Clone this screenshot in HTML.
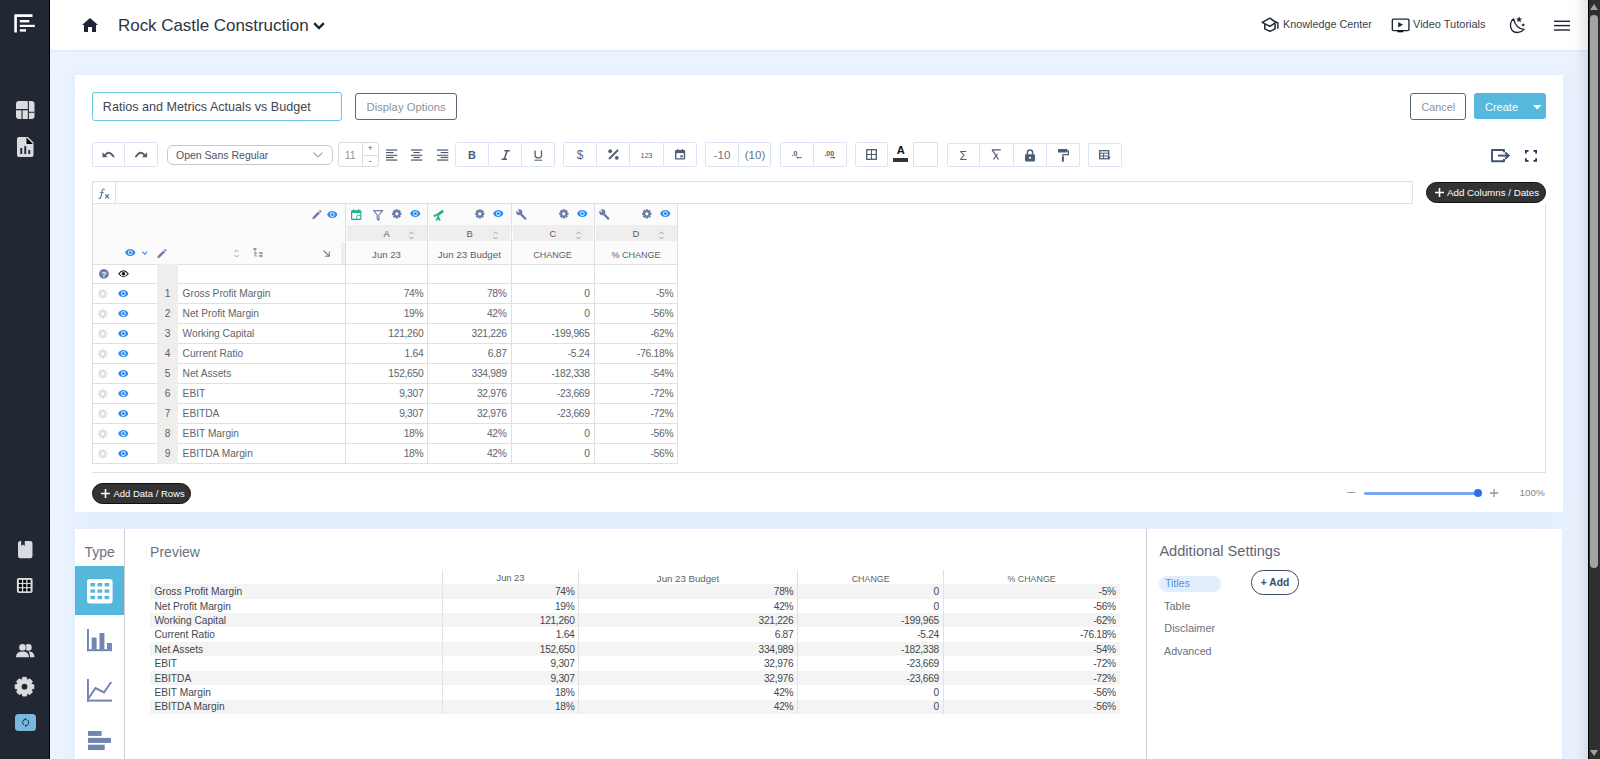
<!DOCTYPE html>
<html><head><meta charset="utf-8"><title>Rock Castle Construction</title>
<style>
html,body{margin:0;padding:0;}
body{width:1600px;height:759px;overflow:hidden;position:relative;background:#edf4fe;font-family:"Liberation Sans", sans-serif;}
.t{position:absolute;white-space:nowrap;}
.b{position:absolute;box-sizing:border-box;}
svg.b{overflow:visible;}
</style></head><body>

<div class="b" style="left:75.00px;top:75.00px;width:1487.50px;height:437.00px;background:#fff;box-shadow:0 0 20px 4px rgba(150,190,245,0.13);"></div>
<div class="b" style="left:75.00px;top:528.50px;width:1487.00px;height:240.00px;background:#fff;box-shadow:0 0 20px 4px rgba(150,190,245,0.13);"></div>
<div class="b" style="left:50.00px;top:0.00px;width:1538.00px;height:50.00px;background:#fff;box-shadow:0 1px 2px rgba(150,170,200,0.2);"></div>
<div class="b" style="left:1563.00px;top:0.00px;width:25.00px;height:759.00px;background:linear-gradient(to right, rgba(150,165,190,0) 0%, rgba(150,165,190,0.04) 55%, rgba(140,150,175,0.24) 100%);"></div>
<svg class="b" style="left:81.50px;top:17.50px;" width="16" height="14" viewBox="0 0 16 14"><path d="M8 0 L16 7 L14 7 L14 14 L10 14 L10 9 L6 9 L6 14 L2 14 L2 7 L0 7 Z" fill="#1e2433"/></svg>
<div class="t" style="top:16.65px;font-size:17px;line-height:17px;color:#2f3441;letter-spacing:-0.05px;left:118.00px;">Rock Castle Construction</div>
<svg class="b" style="left:313.00px;top:21.50px;" width="12" height="8" viewBox="0 0 12 8"><path d="M1.2 1.2 L6 6 L10.8 1.2" fill="none" stroke="#1e2433" stroke-width="2.4"/></svg>
<svg class="b" style="left:1260.50px;top:17.00px;" width="19" height="16" viewBox="0 0 19 16"><path d="M8.9 1.2 L15 5.3 L8.9 9.4 L1.2 5.4 Z" fill="none" stroke="#1e2433" stroke-width="1.5" stroke-linejoin="round"/><path d="M3.8 7.1 V11.8 L8.9 14.4 L14.1 11.8 V7" fill="none" stroke="#1e2433" stroke-width="1.5" stroke-linejoin="round"/><path d="M15 5.3 L16.9 5.7 V11.3" fill="none" stroke="#1e2433" stroke-width="1.4" stroke-linecap="round"/></svg>
<div class="t" style="top:19.42px;font-size:10.8px;line-height:10.8px;color:#3b404b;left:1283.00px;">Knowledge Center</div>
<svg class="b" style="left:1390.50px;top:17.50px;" width="19" height="15" viewBox="0 0 19 15"><rect x="1.35" y="1.15" width="16.6" height="11.4" rx="1" fill="none" stroke="#1e2433" stroke-width="1.35"/><path d="M7.2 4 L12 6.8 L7.2 9.6 Z" fill="#1e2433"/><rect x="6.4" y="12.6" width="6" height="1.7" fill="#111"/></svg>
<div class="t" style="top:19.25px;font-size:11px;line-height:11px;color:#3b404b;left:1413.00px;">Video Tutorials</div>
<svg class="b" style="left:1508.50px;top:16.00px;" width="17" height="17" viewBox="0 0 17 17"><path d="M4.6 2.9 C1.2 4.8 0.3 10.6 3 14.2 C5.6 17.4 11.6 17.4 15.1 13.4 C10.2 13.2 5.6 9.4 4.6 2.9 Z" fill="none" stroke="#1e2433" stroke-width="1.35" stroke-linejoin="round"/><path d="M10.10,0.30 L10.92,2.47 L13.24,2.58 L11.43,4.03 L12.04,6.27 L10.10,5.00 L8.16,6.27 L8.77,4.03 L6.96,2.58 L9.28,2.47 Z" fill="#1e2433"/><path d="M14.20,7.00 L14.73,8.27 L16.10,8.38 L15.06,9.28 L15.38,10.62 L14.20,9.90 L13.02,10.62 L13.34,9.28 L12.30,8.38 L13.67,8.27 Z" fill="#1e2433"/></svg>
<svg class="b" style="left:1554.00px;top:20.00px;" width="16" height="12" viewBox="0 0 16 12"><rect x="0" y="0.6" width="16" height="1.4" fill="#1e2433"/><rect x="0" y="4.9" width="16" height="1.4" fill="#1e2433"/><rect x="0" y="9.2" width="16" height="1.6" fill="#3a3f4a"/></svg>
<div class="b" style="left:0.00px;top:0.00px;width:49.00px;height:759.00px;background:#222734;"></div>
<div class="b" style="left:49.00px;top:0.00px;width:1.00px;height:759.00px;background:#000;"></div>
<svg class="b" style="left:14.00px;top:14.00px;" width="22" height="19" viewBox="0 0 22 19"><path d="M1.6 18.5 V1.6 H18.5" fill="none" stroke="#fff" stroke-width="2.6"/><rect x="5.8" y="6" width="9.5" height="2.4" fill="#fff"/><rect x="5.8" y="10.8" width="15" height="2.2" fill="#fff"/><rect x="5.8" y="15.2" width="6.2" height="2.4" fill="#fff"/></svg>
<svg class="b" style="left:16.00px;top:100.50px;" width="18.5" height="18" viewBox="0 0 18.5 18"><rect x="0" y="0" width="18.5" height="18" rx="3" fill="#d9dbe1"/><path d="M0 8.6 H12.4 M12.4 0 V18 M6 8.6 V18 M12.4 11.2 H18.5" stroke="#222734" stroke-width="1.1"/></svg>
<svg class="b" style="left:16.80px;top:136.80px;" width="16.5" height="20" viewBox="0 0 16.5 20"><path d="M2 0 H11 L16.5 5.5 V18 Q16.5 20 14.5 20 H2 Q0 20 0 18 V2 Q0 0 2 0 Z" fill="#d9dbe1"/><path d="M9.5 0.5 L16 7 H9.5 Z" fill="#000"/><rect x="3.3" y="11" width="1.9" height="6" fill="#222734"/><rect x="7.3" y="9.2" width="1.9" height="7.8" fill="#222734"/><rect x="11.3" y="13" width="1.9" height="4" fill="#222734"/></svg>
<svg class="b" style="left:17.90px;top:540.50px;" width="14.5" height="17.2" viewBox="0 0 14.5 17.2"><path d="M2.5 0 H3.2 V5 L5 3.6 L6.8 5 V0 H12 Q14.5 0 14.5 2.5 V14.7 Q14.5 17.2 12 17.2 H2.5 Q0 17.2 0 14.7 V2.5 Q0 0 2.5 0 Z" fill="#d9dbe1"/></svg>
<svg class="b" style="left:16.10px;top:577.00px;" width="17.5" height="17" viewBox="0 0 17.5 17"><rect x="0.9" y="0.9" width="15.7" height="15.2" rx="2" fill="#d9dbe1"/><rect x="2.9" y="2.9" width="3" height="3" fill="#000"/><rect x="2.9" y="7.1" width="3" height="3" fill="#000"/><rect x="2.9" y="11.3" width="3" height="3" fill="#000"/><rect x="7.2" y="2.9" width="3" height="3" fill="#000"/><rect x="7.2" y="7.1" width="3" height="3" fill="#000"/><rect x="7.2" y="11.3" width="3" height="3" fill="#000"/><rect x="11.5" y="2.9" width="3" height="3" fill="#000"/><rect x="11.5" y="7.1" width="3" height="3" fill="#000"/><rect x="11.5" y="11.3" width="3" height="3" fill="#000"/></svg>
<svg class="b" style="left:16.00px;top:644.00px;" width="18.5" height="13.5" viewBox="0 0 18.5 13.5"><circle cx="12.4" cy="3.4" r="3.3" fill="#d9dbe1"/><path d="M13.6 7.4 Q18.5 8 18.5 13.3 H14 Q14 9.6 12.6 7.5 Z" fill="#d9dbe1"/><circle cx="6.5" cy="3.4" r="3.9" fill="#222734"/><circle cx="6.5" cy="3.4" r="3.3" fill="#d9dbe1"/><path d="M-0.6 13.9 Q-0.6 6.8 6.5 6.8 Q13.6 6.8 13.6 13.9 Z" fill="#222734"/><path d="M0 13.3 Q0 7.5 6.5 7.5 Q13 7.5 13 13.3 Z" fill="#d9dbe1"/></svg>
<svg class="b" style="left:15.40px;top:677.20px;" width="19" height="19.4" viewBox="0 0 19 19.4"><path d="M16.72 7.32 L18.90 7.75 L18.90 11.65 L16.72 12.08 L16.29 13.12 L17.52 14.97 L14.77 17.72 L12.92 16.49 L11.88 16.92 L11.45 19.10 L7.55 19.10 L7.12 16.92 L6.08 16.49 L4.23 17.72 L1.48 14.97 L2.71 13.12 L2.28 12.08 L0.10 11.65 L0.10 7.75 L2.28 7.32 L2.71 6.28 L1.48 4.43 L4.23 1.68 L6.08 2.91 L7.12 2.48 L7.55 0.30 L11.45 0.30 L11.88 2.48 L12.92 2.91 L14.77 1.68 L17.52 4.43 L16.29 6.28 Z" fill="#d9dbe1" stroke="#d9dbe1" stroke-width="0.8" stroke-linejoin="round"/><circle cx="9.5" cy="9.7" r="2.9" fill="#222734"/></svg>
<div class="b" style="left:14.70px;top:713.90px;width:21.00px;height:17.30px;background:#79b7de;border-radius:3.5px;"></div>
<svg class="b" style="left:20.50px;top:717.50px;" width="9.5" height="9.5" viewBox="0 0 9.5 9.5"><path d="M4.8 1.3 A3.2 3.2 0 0 0 3.3 7.3 M4.6 7.7 A3.2 3.2 0 0 0 6.1 1.7" fill="none" stroke="#1e2433" stroke-width="0.9"/><path d="M3.4 1.3 L5.1 0.1 L5.1 2.5 Z M6 7.7 L4.3 6.5 L4.3 8.9 Z" fill="#1e2433"/></svg>
<div class="b" style="left:1588.00px;top:0.00px;width:1.20px;height:759.00px;background:#000;"></div>
<div class="b" style="left:1589.00px;top:0.00px;width:11.00px;height:759.00px;background:#2f2f2f;"></div>
<div class="b" style="left:1590.30px;top:14.80px;width:7.50px;height:553.50px;background:#a3a3a3;border-radius:4px;"></div>
<svg class="b" style="left:1590.00px;top:4.00px;" width="8" height="6" viewBox="0 0 8 6"><polygon points="0,6 4,0 8,6" fill="#a3a3a3"/></svg>
<svg class="b" style="left:1590.00px;top:750.00px;" width="8" height="6" viewBox="0 0 8 6"><polygon points="0,0 8,0 4,6" fill="#a3a3a3"/></svg>
<div class="b" style="left:91.50px;top:91.50px;width:250.00px;height:29.20px;border:1px solid #6ec4e6;border-radius:3px;background:#fff;"></div>
<div class="t" style="top:101.29px;font-size:12.6px;line-height:12.6px;color:#40464f;left:102.80px;">Ratios and Metrics Actuals vs Budget</div>
<div class="b" style="left:355.30px;top:92.60px;width:101.50px;height:27.00px;border:1px solid #5c6675;border-radius:3px;"></div>
<div class="t" style="top:101.89px;font-size:11.3px;line-height:11.3px;color:#8b929c;left:366.50px;">Display Options</div>
<div class="b" style="left:1410.00px;top:92.50px;width:55.50px;height:27.00px;border:1px solid #5c6675;border-radius:3px;"></div>
<div class="t" style="top:102.22px;font-size:10.8px;line-height:10.8px;color:#8b929c;left:1421.50px;">Cancel</div>
<div class="b" style="left:1474.00px;top:93.00px;width:71.50px;height:25.50px;background:#56b8dc;border-radius:3px;"></div>
<div class="t" style="top:101.85px;font-size:11px;line-height:11px;color:#fff;left:1485.00px;">Create</div>
<svg class="b" style="left:1533.00px;top:105.00px;" width="8.5" height="4.5" viewBox="0 0 8.5 4.5"><polygon points="0,0 8.5,0 4.25,4.5" fill="#fff"/></svg>
<div class="b" style="left:91.80px;top:142.30px;width:66.30px;height:24.80px;border:1px solid #dae4f5;border-radius:1.5px;"></div>
<div class="b" style="left:124.40px;top:142.30px;width:1.00px;height:24.80px;background:#dae4f5;"></div>
<svg class="b" style="left:101.00px;top:150.00px;" width="14" height="8" viewBox="0 0 14 8"><path d="M3.8 5.6 Q8 -0.6 12.6 6.6" fill="none" stroke="#4f5d72" stroke-width="1.8" stroke-linecap="round"/><path d="M1.5 2.2 L1.5 7.2 L6.6 7.2 Z" fill="#4f5d72"/></svg>
<svg class="b" style="left:134.00px;top:150.00px;" width="14" height="8" viewBox="0 0 14 8"><path d="M1.9 6.6 Q6.5 -0.6 10.7 5.6" fill="none" stroke="#4f5d72" stroke-width="1.8" stroke-linecap="round"/><path d="M13.1 2.2 L13.1 7.2 L8 7.2 Z" fill="#4f5d72"/></svg>
<div class="b" style="left:167.00px;top:145.00px;width:165.80px;height:19.80px;border:1px solid #c9c9c9;border-radius:6px;"></div>
<div class="t" style="top:149.88px;font-size:10.5px;line-height:10.5px;color:#4d5360;left:176.00px;">Open Sans Regular</div>
<svg class="b" style="left:312.50px;top:151.50px;" width="10" height="6" viewBox="0 0 10 6"><path d="M0.6 0.6 L5 5 L9.4 0.6" fill="none" stroke="#9aa0a8" stroke-width="1.1"/></svg>
<div class="b" style="left:337.50px;top:141.50px;width:41.20px;height:25.80px;border:1px solid #dcdcdc;border-radius:3px;"></div>
<div class="b" style="left:361.80px;top:141.50px;width:1.00px;height:25.80px;background:#dcdcdc;"></div>
<div class="b" style="left:362.00px;top:155.20px;width:16.50px;height:1.00px;background:#dcdcdc;"></div>
<div class="t" style="top:150.07px;font-size:10.5px;line-height:10.5px;color:#8f959d;left:344.80px;">11</div>
<div class="t" style="top:143.95px;font-size:9px;line-height:9px;color:#5a6270;left:70.20px;width:600px;text-align:center;">+</div>
<div class="t" style="top:156.65px;font-size:9px;line-height:9px;color:#5a6270;left:70.20px;width:600px;text-align:center;">-</div>
<svg class="b" style="left:386.00px;top:149.00px;" width="12" height="12" viewBox="0 0 12 12"><rect x="0.00" y="0.30" width="11.30" height="1.5" fill="#6f7888"/><rect x="0.00" y="3.00" width="7.60" height="1.1" fill="#485a72"/><rect x="0.00" y="5.70" width="11.30" height="1.5" fill="#6f7888"/><rect x="0.00" y="8.00" width="7.60" height="1.1" fill="#485a72"/><rect x="0.00" y="10.30" width="11.30" height="1.5" fill="#6f7888"/></svg>
<svg class="b" style="left:411.40px;top:149.00px;" width="12" height="12" viewBox="0 0 12 12"><rect x="0.00" y="0.30" width="11.30" height="1.5" fill="#6f7888"/><rect x="2.50" y="3.00" width="6.30" height="1.1" fill="#485a72"/><rect x="0.00" y="5.70" width="11.30" height="1.5" fill="#6f7888"/><rect x="2.50" y="8.00" width="6.30" height="1.1" fill="#485a72"/><rect x="0.00" y="10.30" width="11.30" height="1.5" fill="#6f7888"/></svg>
<svg class="b" style="left:436.80px;top:149.00px;" width="12" height="12" viewBox="0 0 12 12"><rect x="0.00" y="0.30" width="11.30" height="1.5" fill="#6f7888"/><rect x="3.70" y="3.00" width="7.60" height="1.1" fill="#485a72"/><rect x="0.00" y="5.70" width="11.30" height="1.5" fill="#6f7888"/><rect x="3.70" y="8.00" width="7.60" height="1.1" fill="#485a72"/><rect x="0.00" y="10.30" width="11.30" height="1.5" fill="#6f7888"/></svg>
<div class="b" style="left:455.30px;top:142.30px;width:99.30px;height:25.20px;border:1px solid #dae4f5;border-radius:1.5px;"></div>
<div class="b" style="left:487.90px;top:142.30px;width:1.00px;height:25.20px;background:#dae4f5;"></div>
<div class="b" style="left:521.00px;top:142.30px;width:1.00px;height:25.20px;background:#dae4f5;"></div>
<div class="t" style="top:149.85px;font-size:11px;line-height:11px;color:#4f5d72;font-weight:700;left:171.90px;width:600px;text-align:center;">B</div>
<svg class="b" style="left:500.50px;top:149.80px;" width="9.5" height="10" viewBox="0 0 9.5 10"><path d="M3.4 0.8 H8.8 M0.6 9.2 H6 M6.1 0.8 L3.3 9.2" fill="none" stroke="#4f5d72" stroke-width="1.5"/></svg>
<svg class="b" style="left:534.20px;top:149.60px;" width="9" height="11" viewBox="0 0 9 11"><path d="M1.1 0.6 V5.2 Q1.1 7.9 4.3 7.9 Q7.5 7.9 7.5 5.2 V0.6" fill="none" stroke="#4f5d72" stroke-width="1.3"/><rect x="0.3" y="9.7" width="8" height="1.0" fill="#4f5d72"/></svg>
<div class="b" style="left:563.30px;top:142.30px;width:133.30px;height:24.80px;border:1px solid #dae4f5;border-radius:1.5px;"></div>
<div class="b" style="left:596.20px;top:142.30px;width:1.00px;height:24.80px;background:#dae4f5;"></div>
<div class="b" style="left:629.40px;top:142.30px;width:1.00px;height:24.80px;background:#dae4f5;"></div>
<div class="b" style="left:662.80px;top:142.30px;width:1.00px;height:24.80px;background:#dae4f5;"></div>
<div class="t" style="top:149.20px;font-size:12px;line-height:12px;color:#56647a;left:280.00px;width:600px;text-align:center;">$</div>
<svg class="b" style="left:607.50px;top:149.00px;" width="11" height="11" viewBox="0 0 11 11"><path d="M1 10 L10 1" stroke="#4f5d72" stroke-width="1.8"/><circle cx="2.2" cy="2.2" r="1.9" fill="#4f5d72"/><circle cx="8.8" cy="8.8" r="1.9" fill="#4f5d72"/></svg>
<div class="t" style="top:151.62px;font-size:7.5px;line-height:7.5px;color:#4f5d72;letter-spacing:-0.3px;left:346.40px;width:600px;text-align:center;">123</div>
<svg class="b" style="left:675.00px;top:149.30px;" width="10.2" height="10.6" viewBox="0 0 10.2 10.6"><rect x="0.7" y="1.7" width="8.8" height="8.2" rx="0.7" fill="none" stroke="#4f5d72" stroke-width="1.4"/><rect x="0.7" y="1.7" width="8.8" height="2.4" fill="#4f5d72"/><rect x="2.3" y="0" width="1.2" height="2.3" fill="#4f5d72"/><rect x="6.7" y="0" width="1.2" height="2.3" fill="#4f5d72"/><rect x="5.4" y="6.2" width="2.3" height="2.2" fill="#4f5d72"/></svg>
<div class="b" style="left:705.40px;top:142.30px;width:66.10px;height:24.80px;border:1px solid #dae4f5;border-radius:1.5px;"></div>
<div class="b" style="left:737.90px;top:142.30px;width:1.00px;height:24.80px;background:#dae4f5;"></div>
<div class="t" style="top:149.53px;font-size:11.5px;line-height:11.5px;color:#6b7280;left:422.00px;width:600px;text-align:center;">-10</div>
<div class="t" style="top:149.53px;font-size:11.5px;line-height:11.5px;color:#6b7280;left:455.00px;width:600px;text-align:center;">(10)</div>
<div class="b" style="left:780.10px;top:142.30px;width:66.50px;height:24.80px;border:1px solid #dae4f5;border-radius:1.5px;"></div>
<div class="b" style="left:812.80px;top:142.30px;width:1.00px;height:24.80px;background:#dae4f5;"></div>
<svg class="b" style="left:790.00px;top:150.00px;" width="13" height="9" viewBox="0 0 13 9"><text x="1.6" y="6.2" font-size="7" font-weight="700" font-family="Liberation Sans" fill="#4f5d72">.0</text><path d="M7.4 7.6 H11.7" stroke="#4f5d72" stroke-width="0.9"/><path d="M6 7.6 L7.9 6.5 V8.7 Z" fill="#4f5d72"/></svg>
<svg class="b" style="left:823.00px;top:150.00px;" width="14" height="9" viewBox="0 0 14 9"><text x="1.4" y="6.2" font-size="7" font-weight="700" font-family="Liberation Sans" fill="#4f5d72">.00</text><path d="M7.2 7.6 H11" stroke="#4f5d72" stroke-width="0.9"/><path d="M12.3 7.6 L10.4 6.5 V8.7 Z" fill="#4f5d72"/></svg>
<div class="b" style="left:855.10px;top:142.30px;width:32.80px;height:24.80px;border:1px solid #dae4f5;border-radius:1.5px;"></div>
<svg class="b" style="left:865.50px;top:149.00px;" width="11" height="11" viewBox="0 0 11 11"><rect x="0.7" y="0.7" width="9.6" height="9.6" fill="none" stroke="#4f5d72" stroke-width="1.3"/><path d="M5.5 0.7 V10.3 M0.7 5.5 H10.3" stroke="#4f5d72" stroke-width="1.1"/></svg>
<div class="t" style="top:144.68px;font-size:11.2px;line-height:11.2px;color:#111;font-weight:700;left:600.80px;width:600px;text-align:center;">A</div>
<div class="b" style="left:893.30px;top:157.60px;width:15.00px;height:4.60px;background:#333;"></div>
<div class="b" style="left:913.30px;top:142.30px;width:24.80px;height:24.80px;border:1px solid #dedede;border-radius:2px;"></div>
<div class="b" style="left:946.90px;top:142.50px;width:133.00px;height:24.80px;border:1px solid #dae4f5;border-radius:1.5px;"></div>
<div class="b" style="left:979.40px;top:142.50px;width:1.00px;height:24.80px;background:#dae4f5;"></div>
<div class="b" style="left:1012.90px;top:142.50px;width:1.00px;height:24.80px;background:#dae4f5;"></div>
<div class="b" style="left:1046.10px;top:142.50px;width:1.00px;height:24.80px;background:#dae4f5;"></div>
<div class="t" style="top:150.00px;font-size:12px;line-height:12px;color:#4f5d72;left:663.30px;width:600px;text-align:center;">&Sigma;</div>
<svg class="b" style="left:991.00px;top:149.00px;" width="10.5" height="11.5" viewBox="0 0 10.5 11.5"><path d="M0.8 0.8 H9.8 M1.2 0.8 L7.5 10.5 M6.5 5 L2.5 10.5" stroke="#4f5d72" stroke-width="1.2" fill="none"/></svg>
<svg class="b" style="left:1024.50px;top:148.50px;" width="10" height="12.5" viewBox="0 0 10 12.5"><path d="M2.4 5.5 V3.6 A2.6 2.6 0 0 1 7.6 3.6 V5.5" fill="none" stroke="#4f5d72" stroke-width="1.5"/><rect x="0" y="5.3" width="10" height="7.2" rx="1" fill="#4f5d72"/><circle cx="5" cy="8.8" r="1.1" fill="#fff"/></svg>
<svg class="b" style="left:1058.00px;top:148.50px;" width="11" height="13" viewBox="0 0 11 13"><rect x="0" y="0" width="9.5" height="3.6" rx="0.6" fill="#4f5d72"/><path d="M9.5 1.8 H10.4 V5.6 H4.9 V8" fill="none" stroke="#4f5d72" stroke-width="1.2"/><rect x="3.9" y="7.6" width="2" height="5.2" rx="0.5" fill="#4f5d72"/></svg>
<div class="b" style="left:1088.20px;top:142.50px;width:33.50px;height:24.80px;border:1px solid #dae4f5;border-radius:1.5px;"></div>
<svg class="b" style="left:1099.00px;top:149.50px;" width="12" height="11" viewBox="0 0 12 11"><rect x="0.7" y="0.7" width="9" height="8" fill="none" stroke="#4f5d72" stroke-width="1.3"/><path d="M0.7 3.2 H9.7 M4.6 3.2 V8.7 M0.7 6 H9.7" stroke="#4f5d72" stroke-width="1"/><path d="M8.3 6.8 L11.6 6.8 L10 9.8 Z" fill="#4f5d72"/></svg>
<svg class="b" style="left:1491.00px;top:149.00px;" width="19" height="13.2" viewBox="0 0 19 13.2"><path d="M13 3.2 V1 H1 V12.2 H13 V10" fill="none" stroke="#3e5370" stroke-width="1.9" stroke-linejoin="round"/><path d="M7 6.6 H16.5" stroke="#3e5370" stroke-width="1.9"/><path d="M14.2 3.5 L17.8 6.6 L14.2 9.7" fill="none" stroke="#3e5370" stroke-width="1.9"/></svg>
<svg class="b" style="left:1524.80px;top:149.80px;" width="12" height="11.8" viewBox="0 0 12 11.8"><path d="M0.9 3.5 V0.9 H3.5 M8.5 0.9 H11.1 V3.5 M11.1 8.3 V10.9 H8.5 M3.5 10.9 H0.9 V8.3" fill="none" stroke="#20375a" stroke-width="1.8"/></svg>
<div class="b" style="left:92.00px;top:181.20px;width:1321.00px;height:22.50px;border:1px solid #e0e0e0;background:#fff;"></div>
<div class="b" style="left:115.00px;top:181.20px;width:1.00px;height:22.50px;background:#e0e0e0;"></div>
<svg class="b" style="left:97.50px;top:187.50px;" width="12.5" height="11" viewBox="0 0 12.5 11"><path d="M6.6 1.6 Q5.6 0.3 4.6 1.5 Q3.9 2.6 3.6 5.5 Q3.2 9.6 2.2 10.2 Q1.2 10.7 0.6 9.8" fill="none" stroke="#5a6d92" stroke-width="1.05"/><path d="M2.2 4.6 H5.8" stroke="#5a6d92" stroke-width="0.9"/><path d="M7.2 6.4 L11 10.4 M11 6.4 L7.2 10.4" stroke="#4570b0" stroke-width="1.2"/></svg>
<div class="b" style="left:1426.00px;top:182.00px;width:120.00px;height:21.00px;background:#333;border:1px solid #111;border-radius:11px;"></div>
<svg class="b" style="left:1435.00px;top:187.50px;" width="9" height="9" viewBox="0 0 9 9"><path d="M4.5 0 V9 M0 4.5 H9" stroke="#fff" stroke-width="1.6"/></svg>
<div class="t" style="top:187.71px;font-size:9.75px;line-height:9.75px;color:#fff;left:1447.00px;">Add Columns / Dates</div>
<div class="b" style="left:92.00px;top:203.70px;width:1454.00px;height:269.00px;border:1px solid #e0e0e0;border-top:none;border-left:none;background:#fff;"></div>
<div class="b" style="left:92.00px;top:203.70px;width:1.00px;height:260.40px;background:#e0e0e0;"></div>
<div class="b" style="left:93.00px;top:203.70px;width:585.00px;height:60.50px;background:#fbfbfb;"></div>
<div class="b" style="left:344.50px;top:203.70px;width:1.00px;height:260.00px;background:#e0e0e0;"></div>
<div class="b" style="left:427.00px;top:203.70px;width:1.00px;height:260.00px;background:#e0e0e0;"></div>
<div class="b" style="left:510.60px;top:203.70px;width:1.00px;height:260.00px;background:#e0e0e0;"></div>
<div class="b" style="left:593.90px;top:203.70px;width:1.00px;height:260.00px;background:#e0e0e0;"></div>
<div class="b" style="left:677.10px;top:203.70px;width:1.00px;height:260.00px;background:#e0e0e0;"></div>
<div class="b" style="left:347.00px;top:225.10px;width:79.60px;height:16.40px;background:#f0eded;"></div>
<div class="b" style="left:429.20px;top:225.10px;width:80.60px;height:16.40px;background:#f0eded;"></div>
<div class="b" style="left:512.50px;top:225.10px;width:80.50px;height:16.40px;background:#f0eded;"></div>
<div class="b" style="left:596.00px;top:225.10px;width:80.50px;height:16.40px;background:#f0eded;"></div>
<div class="b" style="left:341.00px;top:242.60px;width:3.50px;height:21.50px;background:#f0eded;"></div>
<div class="b" style="left:93.00px;top:263.70px;width:585.00px;height:1.00px;background:#e0e0e0;"></div>
<div class="b" style="left:93.00px;top:283.00px;width:585.00px;height:1.00px;background:#e0e0e0;"></div>
<div class="b" style="left:93.00px;top:303.00px;width:585.00px;height:1.00px;background:#e0e0e0;"></div>
<div class="b" style="left:93.00px;top:323.00px;width:585.00px;height:1.00px;background:#e0e0e0;"></div>
<div class="b" style="left:93.00px;top:343.00px;width:585.00px;height:1.00px;background:#e0e0e0;"></div>
<div class="b" style="left:93.00px;top:363.00px;width:585.00px;height:1.00px;background:#e0e0e0;"></div>
<div class="b" style="left:93.00px;top:383.00px;width:585.00px;height:1.00px;background:#e0e0e0;"></div>
<div class="b" style="left:93.00px;top:403.00px;width:585.00px;height:1.00px;background:#e0e0e0;"></div>
<div class="b" style="left:93.00px;top:423.00px;width:585.00px;height:1.00px;background:#e0e0e0;"></div>
<div class="b" style="left:93.00px;top:443.00px;width:585.00px;height:1.00px;background:#e0e0e0;"></div>
<div class="b" style="left:93.00px;top:463.00px;width:585.00px;height:1.00px;background:#e0e0e0;"></div>
<div class="b" style="left:157.40px;top:264.20px;width:20.30px;height:199.40px;background:#f0eded;"></div>
<svg class="b" style="left:311.80px;top:210.40px;" width="9.5" height="9.5" viewBox="0 0 9.5 9.5"><path d="M0.3 9.2 L0.8 7 L6.3 1.5 L8 3.2 L2.5 8.7 Z" fill="#6a7ca6"/><path d="M6.9 0.9 L7.6 0.2 Q8 -0.1 8.4 0.2 L9.3 1.1 Q9.6 1.5 9.3 1.9 L8.6 2.6 Z" fill="#6a7ca6"/></svg>
<svg class="b" style="left:327.20px;top:211.20px;" width="10.6" height="7.2" viewBox="0 0 10.6 7.2"><path d="M0.2 3.60 C1.48 -1.08 9.12 -1.08 10.40 3.60 C9.12 8.28 1.48 8.28 0.2 3.60 Z" fill="#2a8ef0"/><circle cx="5.30" cy="3.60" r="2.30" fill="#fff"/><circle cx="5.30" cy="3.60" r="1.51" fill="#2a8ef0"/></svg>
<svg class="b" style="left:125.00px;top:249.20px;" width="10.5" height="7.2" viewBox="0 0 10.5 7.2"><path d="M0.2 3.60 C1.47 -1.08 9.03 -1.08 10.30 3.60 C9.03 8.28 1.47 8.28 0.2 3.60 Z" fill="#2a8ef0"/><circle cx="5.25" cy="3.60" r="2.30" fill="#fff"/><circle cx="5.25" cy="3.60" r="1.51" fill="#2a8ef0"/></svg>
<svg class="b" style="left:142.00px;top:251.00px;" width="6" height="5" viewBox="0 0 6 5"><path d="M0.6 0.9 L2.8 3.4 L5 0.9" fill="none" stroke="#5a94ea" stroke-width="1.25" stroke-linecap="round" stroke-linejoin="round"/></svg>
<svg class="b" style="left:157.00px;top:248.50px;" width="9.5" height="9.5" viewBox="0 0 9.5 9.5"><path d="M0.3 9.2 L0.8 7 L6.3 1.5 L8 3.2 L2.5 8.7 Z" fill="#6a7ca6"/><path d="M6.9 0.9 L7.6 0.2 Q8 -0.1 8.4 0.2 L9.3 1.1 Q9.6 1.5 9.3 1.9 L8.6 2.6 Z" fill="#6a7ca6"/></svg>
<svg class="b" style="left:233.80px;top:248.70px;" width="5" height="9" viewBox="0 0 5 9"><path d="M0.6 2.9 L2.5 1 L4.4 2.9 M0.6 6.1 L2.5 8 L4.4 6.1" fill="none" stroke="#8893a6" stroke-width="0.95"/></svg>
<svg class="b" style="left:253.30px;top:248.40px;" width="10" height="9.4" viewBox="0 0 10 9.4"><rect x="0.3" y="0.2" width="3.2" height="1.5" fill="#6a7ca6"/><path d="M2 1.7 V8 H4.2 M2 5.1 H4.2" fill="none" stroke="#6a7ca6" stroke-width="0.8"/><rect x="6.2" y="4.3" width="3.4" height="1.5" fill="#6a7ca6"/><rect x="6.2" y="7.2" width="3.4" height="1.5" fill="#6a7ca6"/></svg>
<svg class="b" style="left:323.20px;top:250.00px;" width="7" height="7" viewBox="0 0 7 7"><path d="M0.5 0.5 L6 6 M6.3 1.8 V6.3 H1.8" fill="none" stroke="#6a7ca6" stroke-width="1.1"/></svg>
<svg class="b" style="left:98.50px;top:268.70px;" width="9.8" height="9.8" viewBox="0 0 9.8 9.8"><circle cx="4.9" cy="4.9" r="4.9" fill="#6b80ad"/><text x="4.9" y="8" font-size="8" font-family="Liberation Sans" font-weight="700" text-anchor="middle" fill="#fff">?</text></svg>
<svg class="b" style="left:117.60px;top:269.60px;" width="11" height="7.5" viewBox="0 0 11 7.5"><path d="M0.8 3.75 Q5.50 -2.25 10.20 3.75 Q5.50 9.75 0.8 3.75 Z" fill="none" stroke="#111" stroke-width="1.1"/><circle cx="5.50" cy="3.75" r="1.8" fill="#111"/></svg>
<svg class="b" style="left:350.90px;top:208.90px;" width="10.5" height="11" viewBox="0 0 10.5 11"><rect x="0.6" y="1.8" width="9.2" height="8.6" rx="0.6" fill="none" stroke="#1cb38c" stroke-width="1.2"/><rect x="0.6" y="1.8" width="9.2" height="2.2" fill="#1cb38c"/><rect x="2.2" y="0" width="1" height="2" fill="#1cb38c"/><rect x="7.2" y="0" width="1" height="2" fill="#1cb38c"/><circle cx="7.6" cy="8.2" r="2.1" fill="#fff" stroke="#1cb38c" stroke-width="0.9"/></svg>
<svg class="b" style="left:373.20px;top:209.50px;" width="10.2" height="10.8" viewBox="0 0 10.2 10.8"><path d="M0.6 0.6 H9.6 L6 5 V10.2 L4.2 9 V5 Z" fill="none" stroke="#6a7ca6" stroke-width="1.1" stroke-linejoin="round"/></svg>
<svg class="b" style="left:391.80px;top:209.20px;" width="9.6" height="9.6" viewBox="0 0 9.6 9.6"><path d="M8.11 3.52 L9.47 3.68 L9.47 5.92 L8.11 6.08 L8.05 6.24 L8.89 7.31 L7.31 8.89 L6.24 8.05 L6.08 8.11 L5.92 9.47 L3.68 9.47 L3.52 8.11 L3.36 8.05 L2.29 8.89 L0.71 7.31 L1.55 6.24 L1.49 6.08 L0.13 5.92 L0.13 3.68 L1.49 3.52 L1.55 3.36 L0.71 2.29 L2.29 0.71 L3.36 1.55 L3.52 1.49 L3.68 0.13 L5.92 0.13 L6.08 1.49 L6.24 1.55 L7.31 0.71 L8.89 2.29 L8.05 3.36 Z" fill="#6a7ca6"/><circle cx="4.80" cy="4.80" r="1.58" fill="#fff"/></svg>
<svg class="b" style="left:409.70px;top:210.40px;" width="10.6" height="7.2" viewBox="0 0 10.6 7.2"><path d="M0.2 3.60 C1.48 -1.08 9.12 -1.08 10.40 3.60 C9.12 8.28 1.48 8.28 0.2 3.60 Z" fill="#2a8ef0"/><circle cx="5.30" cy="3.60" r="2.30" fill="#fff"/><circle cx="5.30" cy="3.60" r="1.51" fill="#2a8ef0"/></svg>
<svg class="b" style="left:433.10px;top:208.80px;" width="11.5" height="12" viewBox="0 0 11.5 12"><path d="M3.2 5.2 L9.2 0.8 L11 3 L5 7.2 Z" fill="#1cb38c"/><path d="M0.4 6.6 L3 4.8 L4.2 6.4 L1.6 8.2 Z" fill="#1cb38c"/><path d="M5.2 7 L3 11.8 M5.2 7 L7.2 11.8 M5.2 7 V11.5" stroke="#1cb38c" stroke-width="1.1"/></svg>
<svg class="b" style="left:475.20px;top:209.20px;" width="9.6" height="9.6" viewBox="0 0 9.6 9.6"><path d="M8.11 3.52 L9.47 3.68 L9.47 5.92 L8.11 6.08 L8.05 6.24 L8.89 7.31 L7.31 8.89 L6.24 8.05 L6.08 8.11 L5.92 9.47 L3.68 9.47 L3.52 8.11 L3.36 8.05 L2.29 8.89 L0.71 7.31 L1.55 6.24 L1.49 6.08 L0.13 5.92 L0.13 3.68 L1.49 3.52 L1.55 3.36 L0.71 2.29 L2.29 0.71 L3.36 1.55 L3.52 1.49 L3.68 0.13 L5.92 0.13 L6.08 1.49 L6.24 1.55 L7.31 0.71 L8.89 2.29 L8.05 3.36 Z" fill="#6a7ca6"/><circle cx="4.80" cy="4.80" r="1.58" fill="#fff"/></svg>
<svg class="b" style="left:493.00px;top:210.40px;" width="10.6" height="7.2" viewBox="0 0 10.6 7.2"><path d="M0.2 3.60 C1.48 -1.08 9.12 -1.08 10.40 3.60 C9.12 8.28 1.48 8.28 0.2 3.60 Z" fill="#2a8ef0"/><circle cx="5.30" cy="3.60" r="2.30" fill="#fff"/><circle cx="5.30" cy="3.60" r="1.51" fill="#2a8ef0"/></svg>
<svg class="b" style="left:515.50px;top:209.20px;" width="10.5" height="10.5" viewBox="0 0 10.5 10.5"><path d="M9.3 9.6 L4.6 4.9" stroke="#6a7ca6" stroke-width="2.2" stroke-linecap="round"/><circle cx="3.3" cy="3.3" r="3" fill="#6a7ca6"/><path d="M1.3 0.4 L3.4 2.5 L2.5 3.4 L0.4 1.3 Z" fill="#fff"/></svg>
<svg class="b" style="left:558.50px;top:209.20px;" width="9.6" height="9.6" viewBox="0 0 9.6 9.6"><path d="M8.11 3.52 L9.47 3.68 L9.47 5.92 L8.11 6.08 L8.05 6.24 L8.89 7.31 L7.31 8.89 L6.24 8.05 L6.08 8.11 L5.92 9.47 L3.68 9.47 L3.52 8.11 L3.36 8.05 L2.29 8.89 L0.71 7.31 L1.55 6.24 L1.49 6.08 L0.13 5.92 L0.13 3.68 L1.49 3.52 L1.55 3.36 L0.71 2.29 L2.29 0.71 L3.36 1.55 L3.52 1.49 L3.68 0.13 L5.92 0.13 L6.08 1.49 L6.24 1.55 L7.31 0.71 L8.89 2.29 L8.05 3.36 Z" fill="#6a7ca6"/><circle cx="4.80" cy="4.80" r="1.58" fill="#fff"/></svg>
<svg class="b" style="left:576.50px;top:210.40px;" width="10.6" height="7.2" viewBox="0 0 10.6 7.2"><path d="M0.2 3.60 C1.48 -1.08 9.12 -1.08 10.40 3.60 C9.12 8.28 1.48 8.28 0.2 3.60 Z" fill="#2a8ef0"/><circle cx="5.30" cy="3.60" r="2.30" fill="#fff"/><circle cx="5.30" cy="3.60" r="1.51" fill="#2a8ef0"/></svg>
<svg class="b" style="left:598.50px;top:209.20px;" width="10.5" height="10.5" viewBox="0 0 10.5 10.5"><path d="M9.3 9.6 L4.6 4.9" stroke="#6a7ca6" stroke-width="2.2" stroke-linecap="round"/><circle cx="3.3" cy="3.3" r="3" fill="#6a7ca6"/><path d="M1.3 0.4 L3.4 2.5 L2.5 3.4 L0.4 1.3 Z" fill="#fff"/></svg>
<svg class="b" style="left:641.80px;top:209.20px;" width="9.6" height="9.6" viewBox="0 0 9.6 9.6"><path d="M8.11 3.52 L9.47 3.68 L9.47 5.92 L8.11 6.08 L8.05 6.24 L8.89 7.31 L7.31 8.89 L6.24 8.05 L6.08 8.11 L5.92 9.47 L3.68 9.47 L3.52 8.11 L3.36 8.05 L2.29 8.89 L0.71 7.31 L1.55 6.24 L1.49 6.08 L0.13 5.92 L0.13 3.68 L1.49 3.52 L1.55 3.36 L0.71 2.29 L2.29 0.71 L3.36 1.55 L3.52 1.49 L3.68 0.13 L5.92 0.13 L6.08 1.49 L6.24 1.55 L7.31 0.71 L8.89 2.29 L8.05 3.36 Z" fill="#6a7ca6"/><circle cx="4.80" cy="4.80" r="1.58" fill="#fff"/></svg>
<svg class="b" style="left:659.60px;top:210.40px;" width="10.6" height="7.2" viewBox="0 0 10.6 7.2"><path d="M0.2 3.60 C1.48 -1.08 9.12 -1.08 10.40 3.60 C9.12 8.28 1.48 8.28 0.2 3.60 Z" fill="#2a8ef0"/><circle cx="5.30" cy="3.60" r="2.30" fill="#fff"/><circle cx="5.30" cy="3.60" r="1.51" fill="#2a8ef0"/></svg>
<div class="t" style="top:229.01px;font-size:9.4px;line-height:9.4px;color:#5a5f66;left:86.70px;width:600px;text-align:center;">A</div>
<svg class="b" style="left:409.40px;top:230.60px;" width="5" height="9" viewBox="0 0 5 9"><path d="M0.6 2.9 L2.5 1 L4.4 2.9 M0.6 6.1 L2.5 8 L4.4 6.1" fill="none" stroke="#8893a6" stroke-width="0.95"/></svg>
<div class="t" style="top:229.01px;font-size:9.4px;line-height:9.4px;color:#5a5f66;left:169.60px;width:600px;text-align:center;">B</div>
<svg class="b" style="left:492.70px;top:230.60px;" width="5" height="9" viewBox="0 0 5 9"><path d="M0.6 2.9 L2.5 1 L4.4 2.9 M0.6 6.1 L2.5 8 L4.4 6.1" fill="none" stroke="#8893a6" stroke-width="0.95"/></svg>
<div class="t" style="top:229.01px;font-size:9.4px;line-height:9.4px;color:#5a5f66;left:252.80px;width:600px;text-align:center;">C</div>
<svg class="b" style="left:575.90px;top:230.60px;" width="5" height="9" viewBox="0 0 5 9"><path d="M0.6 2.9 L2.5 1 L4.4 2.9 M0.6 6.1 L2.5 8 L4.4 6.1" fill="none" stroke="#8893a6" stroke-width="0.95"/></svg>
<div class="t" style="top:229.01px;font-size:9.4px;line-height:9.4px;color:#5a5f66;left:336.00px;width:600px;text-align:center;">D</div>
<svg class="b" style="left:659.00px;top:230.60px;" width="5" height="9" viewBox="0 0 5 9"><path d="M0.6 2.9 L2.5 1 L4.4 2.9 M0.6 6.1 L2.5 8 L4.4 6.1" fill="none" stroke="#8893a6" stroke-width="0.95"/></svg>
<div class="t" style="top:250.14px;font-size:9.6px;line-height:9.6px;color:#5a5f66;left:86.50px;width:600px;text-align:center;">Jun 23</div>
<div class="t" style="top:249.97px;font-size:9.8px;line-height:9.8px;color:#5a5f66;left:169.40px;width:600px;text-align:center;">Jun 23 Budget</div>
<div class="t" style="top:250.65px;font-size:9.0px;line-height:9.0px;color:#5a5f66;left:252.60px;width:600px;text-align:center;">CHANGE</div>
<div class="t" style="top:250.65px;font-size:9.0px;line-height:9.0px;color:#5a5f66;left:336.00px;width:600px;text-align:center;">% CHANGE</div>
<svg class="b" style="left:98.20px;top:289.10px;" width="9.6" height="9.6" viewBox="0 0 9.6 9.6"><path d="M8.11 3.52 L9.47 3.68 L9.47 5.92 L8.11 6.08 L8.05 6.24 L8.89 7.31 L7.31 8.89 L6.24 8.05 L6.08 8.11 L5.92 9.47 L3.68 9.47 L3.52 8.11 L3.36 8.05 L2.29 8.89 L0.71 7.31 L1.55 6.24 L1.49 6.08 L0.13 5.92 L0.13 3.68 L1.49 3.52 L1.55 3.36 L0.71 2.29 L2.29 0.71 L3.36 1.55 L3.52 1.49 L3.68 0.13 L5.92 0.13 L6.08 1.49 L6.24 1.55 L7.31 0.71 L8.89 2.29 L8.05 3.36 Z" fill="#dde1e8"/><circle cx="4.80" cy="4.80" r="1.58" fill="#fff"/></svg>
<svg class="b" style="left:118.00px;top:289.70px;" width="10.6" height="7.2" viewBox="0 0 10.6 7.2"><path d="M0.2 3.60 C1.48 -1.08 9.12 -1.08 10.40 3.60 C9.12 8.28 1.48 8.28 0.2 3.60 Z" fill="#2a8ef0"/><circle cx="5.30" cy="3.60" r="2.30" fill="#fff"/><circle cx="5.30" cy="3.60" r="1.51" fill="#2a8ef0"/></svg>
<div class="t" style="top:288.63px;font-size:10.2px;line-height:10.2px;color:#5a5f66;left:-132.40px;width:600px;text-align:center;">1</div>
<div class="t" style="top:288.63px;font-size:10.2px;line-height:10.2px;color:#60656c;left:182.60px;">Gross Profit Margin</div>
<div class="t" style="top:288.55px;font-size:10.3px;line-height:10.3px;color:#60656c;letter-spacing:-0.3px;right:1176.60px;text-align:right;">74%</div>
<div class="t" style="top:288.55px;font-size:10.3px;line-height:10.3px;color:#60656c;letter-spacing:-0.3px;right:1093.40px;text-align:right;">78%</div>
<div class="t" style="top:288.55px;font-size:10.3px;line-height:10.3px;color:#60656c;letter-spacing:-0.3px;right:1010.30px;text-align:right;">0</div>
<div class="t" style="top:288.55px;font-size:10.3px;line-height:10.3px;color:#60656c;letter-spacing:-0.3px;right:926.70px;text-align:right;">-5%</div>
<svg class="b" style="left:98.20px;top:309.10px;" width="9.6" height="9.6" viewBox="0 0 9.6 9.6"><path d="M8.11 3.52 L9.47 3.68 L9.47 5.92 L8.11 6.08 L8.05 6.24 L8.89 7.31 L7.31 8.89 L6.24 8.05 L6.08 8.11 L5.92 9.47 L3.68 9.47 L3.52 8.11 L3.36 8.05 L2.29 8.89 L0.71 7.31 L1.55 6.24 L1.49 6.08 L0.13 5.92 L0.13 3.68 L1.49 3.52 L1.55 3.36 L0.71 2.29 L2.29 0.71 L3.36 1.55 L3.52 1.49 L3.68 0.13 L5.92 0.13 L6.08 1.49 L6.24 1.55 L7.31 0.71 L8.89 2.29 L8.05 3.36 Z" fill="#dde1e8"/><circle cx="4.80" cy="4.80" r="1.58" fill="#fff"/></svg>
<svg class="b" style="left:118.00px;top:309.70px;" width="10.6" height="7.2" viewBox="0 0 10.6 7.2"><path d="M0.2 3.60 C1.48 -1.08 9.12 -1.08 10.40 3.60 C9.12 8.28 1.48 8.28 0.2 3.60 Z" fill="#2a8ef0"/><circle cx="5.30" cy="3.60" r="2.30" fill="#fff"/><circle cx="5.30" cy="3.60" r="1.51" fill="#2a8ef0"/></svg>
<div class="t" style="top:308.63px;font-size:10.2px;line-height:10.2px;color:#5a5f66;left:-132.40px;width:600px;text-align:center;">2</div>
<div class="t" style="top:308.63px;font-size:10.2px;line-height:10.2px;color:#60656c;left:182.60px;">Net Profit Margin</div>
<div class="t" style="top:308.55px;font-size:10.3px;line-height:10.3px;color:#60656c;letter-spacing:-0.3px;right:1176.60px;text-align:right;">19%</div>
<div class="t" style="top:308.55px;font-size:10.3px;line-height:10.3px;color:#60656c;letter-spacing:-0.3px;right:1093.40px;text-align:right;">42%</div>
<div class="t" style="top:308.55px;font-size:10.3px;line-height:10.3px;color:#60656c;letter-spacing:-0.3px;right:1010.30px;text-align:right;">0</div>
<div class="t" style="top:308.55px;font-size:10.3px;line-height:10.3px;color:#60656c;letter-spacing:-0.3px;right:926.70px;text-align:right;">-56%</div>
<svg class="b" style="left:98.20px;top:329.10px;" width="9.6" height="9.6" viewBox="0 0 9.6 9.6"><path d="M8.11 3.52 L9.47 3.68 L9.47 5.92 L8.11 6.08 L8.05 6.24 L8.89 7.31 L7.31 8.89 L6.24 8.05 L6.08 8.11 L5.92 9.47 L3.68 9.47 L3.52 8.11 L3.36 8.05 L2.29 8.89 L0.71 7.31 L1.55 6.24 L1.49 6.08 L0.13 5.92 L0.13 3.68 L1.49 3.52 L1.55 3.36 L0.71 2.29 L2.29 0.71 L3.36 1.55 L3.52 1.49 L3.68 0.13 L5.92 0.13 L6.08 1.49 L6.24 1.55 L7.31 0.71 L8.89 2.29 L8.05 3.36 Z" fill="#dde1e8"/><circle cx="4.80" cy="4.80" r="1.58" fill="#fff"/></svg>
<svg class="b" style="left:118.00px;top:329.70px;" width="10.6" height="7.2" viewBox="0 0 10.6 7.2"><path d="M0.2 3.60 C1.48 -1.08 9.12 -1.08 10.40 3.60 C9.12 8.28 1.48 8.28 0.2 3.60 Z" fill="#2a8ef0"/><circle cx="5.30" cy="3.60" r="2.30" fill="#fff"/><circle cx="5.30" cy="3.60" r="1.51" fill="#2a8ef0"/></svg>
<div class="t" style="top:328.63px;font-size:10.2px;line-height:10.2px;color:#5a5f66;left:-132.40px;width:600px;text-align:center;">3</div>
<div class="t" style="top:328.63px;font-size:10.2px;line-height:10.2px;color:#60656c;left:182.60px;">Working Capital</div>
<div class="t" style="top:328.55px;font-size:10.3px;line-height:10.3px;color:#60656c;letter-spacing:-0.3px;right:1176.60px;text-align:right;">121,260</div>
<div class="t" style="top:328.55px;font-size:10.3px;line-height:10.3px;color:#60656c;letter-spacing:-0.3px;right:1093.40px;text-align:right;">321,226</div>
<div class="t" style="top:328.55px;font-size:10.3px;line-height:10.3px;color:#60656c;letter-spacing:-0.3px;right:1010.30px;text-align:right;">-199,965</div>
<div class="t" style="top:328.55px;font-size:10.3px;line-height:10.3px;color:#60656c;letter-spacing:-0.3px;right:926.70px;text-align:right;">-62%</div>
<svg class="b" style="left:98.20px;top:349.10px;" width="9.6" height="9.6" viewBox="0 0 9.6 9.6"><path d="M8.11 3.52 L9.47 3.68 L9.47 5.92 L8.11 6.08 L8.05 6.24 L8.89 7.31 L7.31 8.89 L6.24 8.05 L6.08 8.11 L5.92 9.47 L3.68 9.47 L3.52 8.11 L3.36 8.05 L2.29 8.89 L0.71 7.31 L1.55 6.24 L1.49 6.08 L0.13 5.92 L0.13 3.68 L1.49 3.52 L1.55 3.36 L0.71 2.29 L2.29 0.71 L3.36 1.55 L3.52 1.49 L3.68 0.13 L5.92 0.13 L6.08 1.49 L6.24 1.55 L7.31 0.71 L8.89 2.29 L8.05 3.36 Z" fill="#dde1e8"/><circle cx="4.80" cy="4.80" r="1.58" fill="#fff"/></svg>
<svg class="b" style="left:118.00px;top:349.70px;" width="10.6" height="7.2" viewBox="0 0 10.6 7.2"><path d="M0.2 3.60 C1.48 -1.08 9.12 -1.08 10.40 3.60 C9.12 8.28 1.48 8.28 0.2 3.60 Z" fill="#2a8ef0"/><circle cx="5.30" cy="3.60" r="2.30" fill="#fff"/><circle cx="5.30" cy="3.60" r="1.51" fill="#2a8ef0"/></svg>
<div class="t" style="top:348.63px;font-size:10.2px;line-height:10.2px;color:#5a5f66;left:-132.40px;width:600px;text-align:center;">4</div>
<div class="t" style="top:348.63px;font-size:10.2px;line-height:10.2px;color:#60656c;left:182.60px;">Current Ratio</div>
<div class="t" style="top:348.55px;font-size:10.3px;line-height:10.3px;color:#60656c;letter-spacing:-0.3px;right:1176.60px;text-align:right;">1.64</div>
<div class="t" style="top:348.55px;font-size:10.3px;line-height:10.3px;color:#60656c;letter-spacing:-0.3px;right:1093.40px;text-align:right;">6.87</div>
<div class="t" style="top:348.55px;font-size:10.3px;line-height:10.3px;color:#60656c;letter-spacing:-0.3px;right:1010.30px;text-align:right;">-5.24</div>
<div class="t" style="top:348.55px;font-size:10.3px;line-height:10.3px;color:#60656c;letter-spacing:-0.3px;right:926.70px;text-align:right;">-76.18%</div>
<svg class="b" style="left:98.20px;top:369.10px;" width="9.6" height="9.6" viewBox="0 0 9.6 9.6"><path d="M8.11 3.52 L9.47 3.68 L9.47 5.92 L8.11 6.08 L8.05 6.24 L8.89 7.31 L7.31 8.89 L6.24 8.05 L6.08 8.11 L5.92 9.47 L3.68 9.47 L3.52 8.11 L3.36 8.05 L2.29 8.89 L0.71 7.31 L1.55 6.24 L1.49 6.08 L0.13 5.92 L0.13 3.68 L1.49 3.52 L1.55 3.36 L0.71 2.29 L2.29 0.71 L3.36 1.55 L3.52 1.49 L3.68 0.13 L5.92 0.13 L6.08 1.49 L6.24 1.55 L7.31 0.71 L8.89 2.29 L8.05 3.36 Z" fill="#dde1e8"/><circle cx="4.80" cy="4.80" r="1.58" fill="#fff"/></svg>
<svg class="b" style="left:118.00px;top:369.70px;" width="10.6" height="7.2" viewBox="0 0 10.6 7.2"><path d="M0.2 3.60 C1.48 -1.08 9.12 -1.08 10.40 3.60 C9.12 8.28 1.48 8.28 0.2 3.60 Z" fill="#2a8ef0"/><circle cx="5.30" cy="3.60" r="2.30" fill="#fff"/><circle cx="5.30" cy="3.60" r="1.51" fill="#2a8ef0"/></svg>
<div class="t" style="top:368.63px;font-size:10.2px;line-height:10.2px;color:#5a5f66;left:-132.40px;width:600px;text-align:center;">5</div>
<div class="t" style="top:368.63px;font-size:10.2px;line-height:10.2px;color:#60656c;left:182.60px;">Net Assets</div>
<div class="t" style="top:368.55px;font-size:10.3px;line-height:10.3px;color:#60656c;letter-spacing:-0.3px;right:1176.60px;text-align:right;">152,650</div>
<div class="t" style="top:368.55px;font-size:10.3px;line-height:10.3px;color:#60656c;letter-spacing:-0.3px;right:1093.40px;text-align:right;">334,989</div>
<div class="t" style="top:368.55px;font-size:10.3px;line-height:10.3px;color:#60656c;letter-spacing:-0.3px;right:1010.30px;text-align:right;">-182,338</div>
<div class="t" style="top:368.55px;font-size:10.3px;line-height:10.3px;color:#60656c;letter-spacing:-0.3px;right:926.70px;text-align:right;">-54%</div>
<svg class="b" style="left:98.20px;top:389.10px;" width="9.6" height="9.6" viewBox="0 0 9.6 9.6"><path d="M8.11 3.52 L9.47 3.68 L9.47 5.92 L8.11 6.08 L8.05 6.24 L8.89 7.31 L7.31 8.89 L6.24 8.05 L6.08 8.11 L5.92 9.47 L3.68 9.47 L3.52 8.11 L3.36 8.05 L2.29 8.89 L0.71 7.31 L1.55 6.24 L1.49 6.08 L0.13 5.92 L0.13 3.68 L1.49 3.52 L1.55 3.36 L0.71 2.29 L2.29 0.71 L3.36 1.55 L3.52 1.49 L3.68 0.13 L5.92 0.13 L6.08 1.49 L6.24 1.55 L7.31 0.71 L8.89 2.29 L8.05 3.36 Z" fill="#dde1e8"/><circle cx="4.80" cy="4.80" r="1.58" fill="#fff"/></svg>
<svg class="b" style="left:118.00px;top:389.70px;" width="10.6" height="7.2" viewBox="0 0 10.6 7.2"><path d="M0.2 3.60 C1.48 -1.08 9.12 -1.08 10.40 3.60 C9.12 8.28 1.48 8.28 0.2 3.60 Z" fill="#2a8ef0"/><circle cx="5.30" cy="3.60" r="2.30" fill="#fff"/><circle cx="5.30" cy="3.60" r="1.51" fill="#2a8ef0"/></svg>
<div class="t" style="top:388.63px;font-size:10.2px;line-height:10.2px;color:#5a5f66;left:-132.40px;width:600px;text-align:center;">6</div>
<div class="t" style="top:388.63px;font-size:10.2px;line-height:10.2px;color:#60656c;left:182.60px;">EBIT</div>
<div class="t" style="top:388.55px;font-size:10.3px;line-height:10.3px;color:#60656c;letter-spacing:-0.3px;right:1176.60px;text-align:right;">9,307</div>
<div class="t" style="top:388.55px;font-size:10.3px;line-height:10.3px;color:#60656c;letter-spacing:-0.3px;right:1093.40px;text-align:right;">32,976</div>
<div class="t" style="top:388.55px;font-size:10.3px;line-height:10.3px;color:#60656c;letter-spacing:-0.3px;right:1010.30px;text-align:right;">-23,669</div>
<div class="t" style="top:388.55px;font-size:10.3px;line-height:10.3px;color:#60656c;letter-spacing:-0.3px;right:926.70px;text-align:right;">-72%</div>
<svg class="b" style="left:98.20px;top:409.10px;" width="9.6" height="9.6" viewBox="0 0 9.6 9.6"><path d="M8.11 3.52 L9.47 3.68 L9.47 5.92 L8.11 6.08 L8.05 6.24 L8.89 7.31 L7.31 8.89 L6.24 8.05 L6.08 8.11 L5.92 9.47 L3.68 9.47 L3.52 8.11 L3.36 8.05 L2.29 8.89 L0.71 7.31 L1.55 6.24 L1.49 6.08 L0.13 5.92 L0.13 3.68 L1.49 3.52 L1.55 3.36 L0.71 2.29 L2.29 0.71 L3.36 1.55 L3.52 1.49 L3.68 0.13 L5.92 0.13 L6.08 1.49 L6.24 1.55 L7.31 0.71 L8.89 2.29 L8.05 3.36 Z" fill="#dde1e8"/><circle cx="4.80" cy="4.80" r="1.58" fill="#fff"/></svg>
<svg class="b" style="left:118.00px;top:409.70px;" width="10.6" height="7.2" viewBox="0 0 10.6 7.2"><path d="M0.2 3.60 C1.48 -1.08 9.12 -1.08 10.40 3.60 C9.12 8.28 1.48 8.28 0.2 3.60 Z" fill="#2a8ef0"/><circle cx="5.30" cy="3.60" r="2.30" fill="#fff"/><circle cx="5.30" cy="3.60" r="1.51" fill="#2a8ef0"/></svg>
<div class="t" style="top:408.63px;font-size:10.2px;line-height:10.2px;color:#5a5f66;left:-132.40px;width:600px;text-align:center;">7</div>
<div class="t" style="top:408.63px;font-size:10.2px;line-height:10.2px;color:#60656c;left:182.60px;">EBITDA</div>
<div class="t" style="top:408.55px;font-size:10.3px;line-height:10.3px;color:#60656c;letter-spacing:-0.3px;right:1176.60px;text-align:right;">9,307</div>
<div class="t" style="top:408.55px;font-size:10.3px;line-height:10.3px;color:#60656c;letter-spacing:-0.3px;right:1093.40px;text-align:right;">32,976</div>
<div class="t" style="top:408.55px;font-size:10.3px;line-height:10.3px;color:#60656c;letter-spacing:-0.3px;right:1010.30px;text-align:right;">-23,669</div>
<div class="t" style="top:408.55px;font-size:10.3px;line-height:10.3px;color:#60656c;letter-spacing:-0.3px;right:926.70px;text-align:right;">-72%</div>
<svg class="b" style="left:98.20px;top:429.10px;" width="9.6" height="9.6" viewBox="0 0 9.6 9.6"><path d="M8.11 3.52 L9.47 3.68 L9.47 5.92 L8.11 6.08 L8.05 6.24 L8.89 7.31 L7.31 8.89 L6.24 8.05 L6.08 8.11 L5.92 9.47 L3.68 9.47 L3.52 8.11 L3.36 8.05 L2.29 8.89 L0.71 7.31 L1.55 6.24 L1.49 6.08 L0.13 5.92 L0.13 3.68 L1.49 3.52 L1.55 3.36 L0.71 2.29 L2.29 0.71 L3.36 1.55 L3.52 1.49 L3.68 0.13 L5.92 0.13 L6.08 1.49 L6.24 1.55 L7.31 0.71 L8.89 2.29 L8.05 3.36 Z" fill="#dde1e8"/><circle cx="4.80" cy="4.80" r="1.58" fill="#fff"/></svg>
<svg class="b" style="left:118.00px;top:429.70px;" width="10.6" height="7.2" viewBox="0 0 10.6 7.2"><path d="M0.2 3.60 C1.48 -1.08 9.12 -1.08 10.40 3.60 C9.12 8.28 1.48 8.28 0.2 3.60 Z" fill="#2a8ef0"/><circle cx="5.30" cy="3.60" r="2.30" fill="#fff"/><circle cx="5.30" cy="3.60" r="1.51" fill="#2a8ef0"/></svg>
<div class="t" style="top:428.63px;font-size:10.2px;line-height:10.2px;color:#5a5f66;left:-132.40px;width:600px;text-align:center;">8</div>
<div class="t" style="top:428.63px;font-size:10.2px;line-height:10.2px;color:#60656c;left:182.60px;">EBIT Margin</div>
<div class="t" style="top:428.55px;font-size:10.3px;line-height:10.3px;color:#60656c;letter-spacing:-0.3px;right:1176.60px;text-align:right;">18%</div>
<div class="t" style="top:428.55px;font-size:10.3px;line-height:10.3px;color:#60656c;letter-spacing:-0.3px;right:1093.40px;text-align:right;">42%</div>
<div class="t" style="top:428.55px;font-size:10.3px;line-height:10.3px;color:#60656c;letter-spacing:-0.3px;right:1010.30px;text-align:right;">0</div>
<div class="t" style="top:428.55px;font-size:10.3px;line-height:10.3px;color:#60656c;letter-spacing:-0.3px;right:926.70px;text-align:right;">-56%</div>
<svg class="b" style="left:98.20px;top:449.10px;" width="9.6" height="9.6" viewBox="0 0 9.6 9.6"><path d="M8.11 3.52 L9.47 3.68 L9.47 5.92 L8.11 6.08 L8.05 6.24 L8.89 7.31 L7.31 8.89 L6.24 8.05 L6.08 8.11 L5.92 9.47 L3.68 9.47 L3.52 8.11 L3.36 8.05 L2.29 8.89 L0.71 7.31 L1.55 6.24 L1.49 6.08 L0.13 5.92 L0.13 3.68 L1.49 3.52 L1.55 3.36 L0.71 2.29 L2.29 0.71 L3.36 1.55 L3.52 1.49 L3.68 0.13 L5.92 0.13 L6.08 1.49 L6.24 1.55 L7.31 0.71 L8.89 2.29 L8.05 3.36 Z" fill="#dde1e8"/><circle cx="4.80" cy="4.80" r="1.58" fill="#fff"/></svg>
<svg class="b" style="left:118.00px;top:449.70px;" width="10.6" height="7.2" viewBox="0 0 10.6 7.2"><path d="M0.2 3.60 C1.48 -1.08 9.12 -1.08 10.40 3.60 C9.12 8.28 1.48 8.28 0.2 3.60 Z" fill="#2a8ef0"/><circle cx="5.30" cy="3.60" r="2.30" fill="#fff"/><circle cx="5.30" cy="3.60" r="1.51" fill="#2a8ef0"/></svg>
<div class="t" style="top:448.63px;font-size:10.2px;line-height:10.2px;color:#5a5f66;left:-132.40px;width:600px;text-align:center;">9</div>
<div class="t" style="top:448.63px;font-size:10.2px;line-height:10.2px;color:#60656c;left:182.60px;">EBITDA Margin</div>
<div class="t" style="top:448.55px;font-size:10.3px;line-height:10.3px;color:#60656c;letter-spacing:-0.3px;right:1176.60px;text-align:right;">18%</div>
<div class="t" style="top:448.55px;font-size:10.3px;line-height:10.3px;color:#60656c;letter-spacing:-0.3px;right:1093.40px;text-align:right;">42%</div>
<div class="t" style="top:448.55px;font-size:10.3px;line-height:10.3px;color:#60656c;letter-spacing:-0.3px;right:1010.30px;text-align:right;">0</div>
<div class="t" style="top:448.55px;font-size:10.3px;line-height:10.3px;color:#60656c;letter-spacing:-0.3px;right:926.70px;text-align:right;">-56%</div>
<div class="b" style="left:91.80px;top:482.60px;width:99.60px;height:21.10px;background:#333;border:1px solid #111;border-radius:11px;"></div>
<svg class="b" style="left:101.20px;top:488.60px;" width="9" height="9" viewBox="0 0 9 9"><path d="M4.5 0 V9 M0 4.5 H9" stroke="#fff" stroke-width="1.6"/></svg>
<div class="t" style="top:488.73px;font-size:9.5px;line-height:9.5px;color:#fff;left:113.40px;">Add Data / Rows</div>
<div class="b" style="left:1347.20px;top:492.40px;width:7.50px;height:1.10px;background:#9aa3b0;"></div>
<div class="b" style="left:1364.00px;top:491.80px;width:113.80px;height:3.00px;background:#7aa6f6;border-radius:1.5px;"></div>
<div class="b" style="left:1473.50px;top:489.00px;width:8.00px;height:8.00px;background:#2e6cf2;border-radius:50%;"></div>
<svg class="b" style="left:1490.00px;top:489.20px;" width="8.2" height="8" viewBox="0 0 8.2 8"><path d="M4.1 0 V8 M0 4 H8.2" stroke="#8a95a5" stroke-width="1.3"/></svg>
<div class="t" style="top:488.19px;font-size:9.9px;line-height:9.9px;color:#7f858d;right:55.20px;text-align:right;">100%</div>
<div class="b" style="left:123.60px;top:528.50px;width:1.00px;height:231.00px;background:#d0d0d0;"></div>
<div class="b" style="left:1146.00px;top:528.50px;width:1.00px;height:231.00px;background:#d0d0d0;"></div>
<div class="t" style="top:544.50px;font-size:14px;line-height:14px;color:#6b7280;left:84.50px;">Type</div>
<div class="b" style="left:75.00px;top:565.90px;width:48.60px;height:49.30px;background:#55b8da;"></div>
<svg class="b" style="left:86.90px;top:578.50px;" width="25.6" height="24.5" viewBox="0 0 25.6 24.5"><rect x="0" y="0" width="25.6" height="24.5" rx="3" fill="#fff"/><rect x="3.4" y="4.0" width="4.7" height="3.4" fill="#55b8da"/><rect x="3.4" y="10.4" width="4.7" height="3.4" fill="#55b8da"/><rect x="3.4" y="16.8" width="4.7" height="3.4" fill="#55b8da"/><rect x="10.5" y="4.0" width="4.7" height="3.4" fill="#55b8da"/><rect x="10.5" y="10.4" width="4.7" height="3.4" fill="#55b8da"/><rect x="10.5" y="16.8" width="4.7" height="3.4" fill="#55b8da"/><rect x="17.6" y="4.0" width="4.7" height="3.4" fill="#55b8da"/><rect x="17.6" y="10.4" width="4.7" height="3.4" fill="#55b8da"/><rect x="17.6" y="16.8" width="4.7" height="3.4" fill="#55b8da"/></svg>
<svg class="b" style="left:87.30px;top:629.00px;" width="25" height="22.2" viewBox="0 0 25 22.2"><rect x="0" y="0" width="1.9" height="22.2" fill="#7284b0"/><rect x="0" y="20.2" width="25" height="2" fill="#7284b0"/><rect x="4.7" y="8.5" width="4.9" height="12" fill="#7284b0"/><rect x="12.5" y="4" width="4.9" height="16.5" fill="#7284b0"/><rect x="20" y="14" width="4.9" height="6.5" fill="#7284b0"/></svg>
<svg class="b" style="left:87.30px;top:678.60px;" width="25" height="22.6" viewBox="0 0 25 22.6"><rect x="0" y="0" width="1.9" height="22.6" fill="#7284b0"/><rect x="0" y="20.6" width="25" height="2" fill="#7284b0"/><path d="M1.2 19.8 L8.5 9 L17 13.5 L24.2 3" fill="none" stroke="#7284b0" stroke-width="2"/></svg>
<svg class="b" style="left:88.20px;top:730.60px;" width="23" height="19" viewBox="0 0 23 19"><rect x="0" y="0" width="13.6" height="4.9" fill="#7284b0"/><rect x="0" y="6.9" width="23" height="5" fill="#7284b0"/><rect x="0" y="13.7" width="16.7" height="5.3" fill="#7284b0"/></svg>
<div class="t" style="top:544.50px;font-size:14px;line-height:14px;color:#6b7280;left:150.10px;">Preview</div>
<div class="t" style="top:574.39px;font-size:9.3px;line-height:9.3px;color:#5a5f66;left:210.50px;width:600px;text-align:center;">Jun 23</div>
<div class="t" style="top:574.09px;font-size:9.66px;line-height:9.66px;color:#5a5f66;left:388.00px;width:600px;text-align:center;">Jun 23 Budget</div>
<div class="t" style="top:574.73px;font-size:8.9px;line-height:8.9px;color:#5a5f66;left:570.70px;width:600px;text-align:center;">CHANGE</div>
<div class="t" style="top:574.78px;font-size:8.85px;line-height:8.85px;color:#5a5f66;left:731.60px;width:600px;text-align:center;">% CHANGE</div>
<div class="b" style="left:150.00px;top:584.30px;width:970.00px;height:14.40px;background:#f4f4f4;"></div>
<div class="b" style="left:150.00px;top:613.10px;width:970.00px;height:14.40px;background:#f4f4f4;"></div>
<div class="b" style="left:150.00px;top:641.90px;width:970.00px;height:14.40px;background:#f4f4f4;"></div>
<div class="b" style="left:150.00px;top:670.70px;width:970.00px;height:14.40px;background:#f4f4f4;"></div>
<div class="b" style="left:150.00px;top:699.50px;width:970.00px;height:14.40px;background:#f4f4f4;"></div>
<div class="b" style="left:442.00px;top:570.20px;width:1.00px;height:143.90px;background:#e2e2e2;"></div>
<div class="b" style="left:578.00px;top:570.20px;width:1.00px;height:143.90px;background:#e2e2e2;"></div>
<div class="b" style="left:797.10px;top:570.20px;width:1.00px;height:143.90px;background:#e2e2e2;"></div>
<div class="b" style="left:942.80px;top:570.20px;width:1.00px;height:143.90px;background:#e2e2e2;"></div>
<div class="t" style="top:587.33px;font-size:10.2px;line-height:10.2px;color:#42474f;left:154.40px;">Gross Profit Margin</div>
<div class="t" style="top:587.33px;font-size:10.2px;line-height:10.2px;color:#42474f;letter-spacing:-0.3px;right:1025.50px;text-align:right;">74%</div>
<div class="t" style="top:587.33px;font-size:10.2px;line-height:10.2px;color:#42474f;letter-spacing:-0.3px;right:806.70px;text-align:right;">78%</div>
<div class="t" style="top:587.33px;font-size:10.2px;line-height:10.2px;color:#42474f;letter-spacing:-0.3px;right:661.10px;text-align:right;">0</div>
<div class="t" style="top:587.33px;font-size:10.2px;line-height:10.2px;color:#42474f;letter-spacing:-0.3px;right:484.20px;text-align:right;">-5%</div>
<div class="t" style="top:602.33px;font-size:10.2px;line-height:10.2px;color:#42474f;left:154.40px;">Net Profit Margin</div>
<div class="t" style="top:602.33px;font-size:10.2px;line-height:10.2px;color:#42474f;letter-spacing:-0.3px;right:1025.50px;text-align:right;">19%</div>
<div class="t" style="top:602.33px;font-size:10.2px;line-height:10.2px;color:#42474f;letter-spacing:-0.3px;right:806.70px;text-align:right;">42%</div>
<div class="t" style="top:602.33px;font-size:10.2px;line-height:10.2px;color:#42474f;letter-spacing:-0.3px;right:661.10px;text-align:right;">0</div>
<div class="t" style="top:602.33px;font-size:10.2px;line-height:10.2px;color:#42474f;letter-spacing:-0.3px;right:484.20px;text-align:right;">-56%</div>
<div class="t" style="top:616.33px;font-size:10.2px;line-height:10.2px;color:#42474f;left:154.40px;">Working Capital</div>
<div class="t" style="top:616.33px;font-size:10.2px;line-height:10.2px;color:#42474f;letter-spacing:-0.3px;right:1025.50px;text-align:right;">121,260</div>
<div class="t" style="top:616.33px;font-size:10.2px;line-height:10.2px;color:#42474f;letter-spacing:-0.3px;right:806.70px;text-align:right;">321,226</div>
<div class="t" style="top:616.33px;font-size:10.2px;line-height:10.2px;color:#42474f;letter-spacing:-0.3px;right:661.10px;text-align:right;">-199,965</div>
<div class="t" style="top:616.33px;font-size:10.2px;line-height:10.2px;color:#42474f;letter-spacing:-0.3px;right:484.20px;text-align:right;">-62%</div>
<div class="t" style="top:630.33px;font-size:10.2px;line-height:10.2px;color:#42474f;left:154.40px;">Current Ratio</div>
<div class="t" style="top:630.33px;font-size:10.2px;line-height:10.2px;color:#42474f;letter-spacing:-0.3px;right:1025.50px;text-align:right;">1.64</div>
<div class="t" style="top:630.33px;font-size:10.2px;line-height:10.2px;color:#42474f;letter-spacing:-0.3px;right:806.70px;text-align:right;">6.87</div>
<div class="t" style="top:630.33px;font-size:10.2px;line-height:10.2px;color:#42474f;letter-spacing:-0.3px;right:661.10px;text-align:right;">-5.24</div>
<div class="t" style="top:630.33px;font-size:10.2px;line-height:10.2px;color:#42474f;letter-spacing:-0.3px;right:484.20px;text-align:right;">-76.18%</div>
<div class="t" style="top:645.33px;font-size:10.2px;line-height:10.2px;color:#42474f;left:154.40px;">Net Assets</div>
<div class="t" style="top:645.33px;font-size:10.2px;line-height:10.2px;color:#42474f;letter-spacing:-0.3px;right:1025.50px;text-align:right;">152,650</div>
<div class="t" style="top:645.33px;font-size:10.2px;line-height:10.2px;color:#42474f;letter-spacing:-0.3px;right:806.70px;text-align:right;">334,989</div>
<div class="t" style="top:645.33px;font-size:10.2px;line-height:10.2px;color:#42474f;letter-spacing:-0.3px;right:661.10px;text-align:right;">-182,338</div>
<div class="t" style="top:645.33px;font-size:10.2px;line-height:10.2px;color:#42474f;letter-spacing:-0.3px;right:484.20px;text-align:right;">-54%</div>
<div class="t" style="top:659.33px;font-size:10.2px;line-height:10.2px;color:#42474f;left:154.40px;">EBIT</div>
<div class="t" style="top:659.33px;font-size:10.2px;line-height:10.2px;color:#42474f;letter-spacing:-0.3px;right:1025.50px;text-align:right;">9,307</div>
<div class="t" style="top:659.33px;font-size:10.2px;line-height:10.2px;color:#42474f;letter-spacing:-0.3px;right:806.70px;text-align:right;">32,976</div>
<div class="t" style="top:659.33px;font-size:10.2px;line-height:10.2px;color:#42474f;letter-spacing:-0.3px;right:661.10px;text-align:right;">-23,669</div>
<div class="t" style="top:659.33px;font-size:10.2px;line-height:10.2px;color:#42474f;letter-spacing:-0.3px;right:484.20px;text-align:right;">-72%</div>
<div class="t" style="top:674.33px;font-size:10.2px;line-height:10.2px;color:#42474f;left:154.40px;">EBITDA</div>
<div class="t" style="top:674.33px;font-size:10.2px;line-height:10.2px;color:#42474f;letter-spacing:-0.3px;right:1025.50px;text-align:right;">9,307</div>
<div class="t" style="top:674.33px;font-size:10.2px;line-height:10.2px;color:#42474f;letter-spacing:-0.3px;right:806.70px;text-align:right;">32,976</div>
<div class="t" style="top:674.33px;font-size:10.2px;line-height:10.2px;color:#42474f;letter-spacing:-0.3px;right:661.10px;text-align:right;">-23,669</div>
<div class="t" style="top:674.33px;font-size:10.2px;line-height:10.2px;color:#42474f;letter-spacing:-0.3px;right:484.20px;text-align:right;">-72%</div>
<div class="t" style="top:688.33px;font-size:10.2px;line-height:10.2px;color:#42474f;left:154.40px;">EBIT Margin</div>
<div class="t" style="top:688.33px;font-size:10.2px;line-height:10.2px;color:#42474f;letter-spacing:-0.3px;right:1025.50px;text-align:right;">18%</div>
<div class="t" style="top:688.33px;font-size:10.2px;line-height:10.2px;color:#42474f;letter-spacing:-0.3px;right:806.70px;text-align:right;">42%</div>
<div class="t" style="top:688.33px;font-size:10.2px;line-height:10.2px;color:#42474f;letter-spacing:-0.3px;right:661.10px;text-align:right;">0</div>
<div class="t" style="top:688.33px;font-size:10.2px;line-height:10.2px;color:#42474f;letter-spacing:-0.3px;right:484.20px;text-align:right;">-56%</div>
<div class="t" style="top:702.33px;font-size:10.2px;line-height:10.2px;color:#42474f;left:154.40px;">EBITDA Margin</div>
<div class="t" style="top:702.33px;font-size:10.2px;line-height:10.2px;color:#42474f;letter-spacing:-0.3px;right:1025.50px;text-align:right;">18%</div>
<div class="t" style="top:702.33px;font-size:10.2px;line-height:10.2px;color:#42474f;letter-spacing:-0.3px;right:806.70px;text-align:right;">42%</div>
<div class="t" style="top:702.33px;font-size:10.2px;line-height:10.2px;color:#42474f;letter-spacing:-0.3px;right:661.10px;text-align:right;">0</div>
<div class="t" style="top:702.33px;font-size:10.2px;line-height:10.2px;color:#42474f;letter-spacing:-0.3px;right:484.20px;text-align:right;">-56%</div>
<div class="t" style="top:544.29px;font-size:14.6px;line-height:14.6px;color:#5f6673;left:1159.40px;">Additional Settings</div>
<div class="b" style="left:1159.40px;top:575.70px;width:61.80px;height:16.60px;background:#e3eefc;border-radius:8.3px;"></div>
<div class="t" style="top:578.49px;font-size:10.6px;line-height:10.6px;color:#4d94e8;left:1164.90px;">Titles</div>
<div class="t" style="top:600.85px;font-size:11px;line-height:11px;color:#6b7280;left:1164.00px;">Table</div>
<div class="t" style="top:623.24px;font-size:10.9px;line-height:10.9px;color:#6b7280;left:1164.30px;">Disclaimer</div>
<div class="t" style="top:645.90px;font-size:10.7px;line-height:10.7px;color:#6b7280;left:1164.00px;">Advanced</div>
<div class="b" style="left:1251.20px;top:570.20px;width:48.30px;height:24.40px;border:1.8px solid #3c4d63;border-radius:12.2px;"></div>
<div class="t" style="top:577.54px;font-size:10.3px;line-height:10.3px;color:#3c4d63;font-weight:700;left:1260.80px;">+ Add</div>
</body></html>
